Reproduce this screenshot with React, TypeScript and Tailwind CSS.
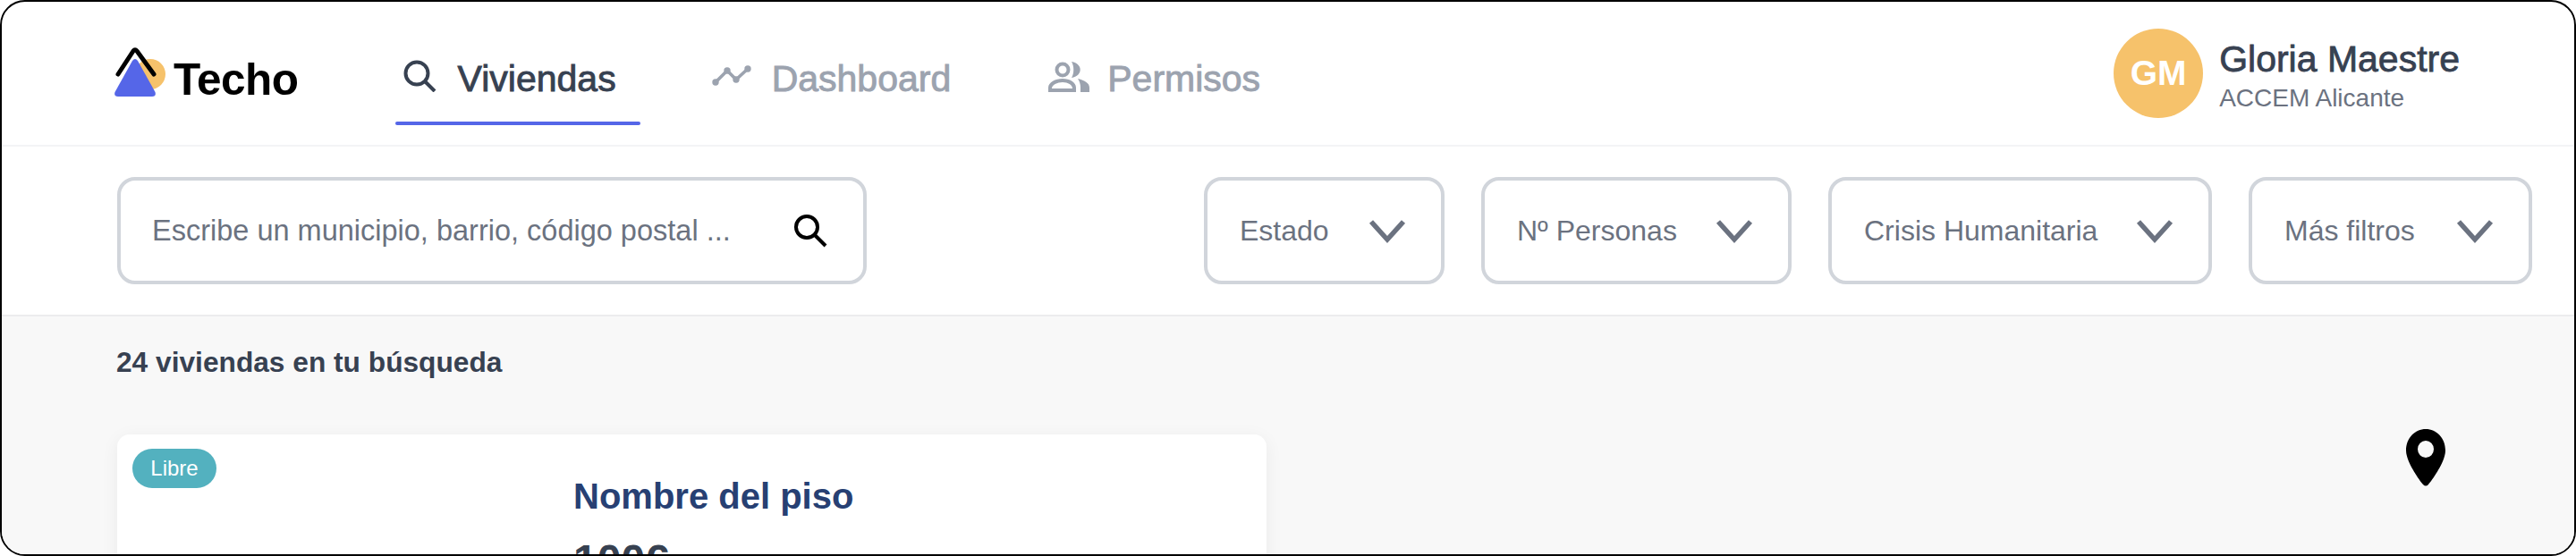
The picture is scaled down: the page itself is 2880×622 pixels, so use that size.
import React from "react";

const font = "font-['Liberation_Sans',Arial,sans-serif]";

function Logo() {
  return (
    <svg width="58" height="58" viewBox="0 0 58 58" className="-mt-[2px] shrink-0">
      <circle cx="40" cy="31" r="17" fill="#f6c26b" />
      <path d="M20 16 Q23 12 26 16 L45.500 51 Q47 56 42 56 L4 56 Q-1 56 0.500 51 Z" fill="#5566e8" />
      <path d="M4 31 L21 5 Q23 2.500 25 5 L44 31" fill="none" stroke="#000" strokeWidth="5" strokeLinecap="round" strokeLinejoin="round" />
    </svg>
  );
}

function NavItem({ icon, label, active, className, gap }: { icon: React.ReactNode; label: string; active?: boolean; className: string; gap: string }) {
  return (
    <div className={`relative flex h-[162px] items-center pt-[12px] ${gap} ${className}`}>
      <div className="-mt-[6px] flex shrink-0 items-center">{icon}</div>
      <span className={`text-[41px] leading-none [-webkit-text-stroke:0.9px_currentColor] ${active ? "text-[#374151]" : "text-[#9ca3af]"}`}>{label}</span>
      {active && <div className="absolute bottom-[23px] left-[-9px] right-[-27px] h-1 rounded-full bg-[#5566e8]" />}
    </div>
  );
}

function Filter({ label, width }: { label: string; width: string }) {
  return (
    <div className={`flex h-[120px] items-center justify-between rounded-[20px] border-4 border-[#d1d5db] pl-[36px] pr-[38px] ${width}`}>
      <span className="text-[32px] leading-none text-[#6b7280]">{label}</span>
      <svg width="44" height="30" viewBox="0 0 44 30" fill="none" stroke="#6b7280" strokeWidth="5.500" className="shrink-0">
        <path d="M4 5 L22 25 L40 5" />
      </svg>
    </div>
  );
}

export default function App() {
  return (
    <div className={`${font} h-[622px] w-[2880px] overflow-hidden bg-white`}>
      <div className="flex h-[622px] flex-col overflow-hidden rounded-[28px] border-2 border-black bg-white">
        <header className="flex h-[162px] shrink-0 items-center border-b-2 border-[#f3f4f6] pl-[126px] pr-[128px]">
          <Logo />
          <span className="ml-[8px] mt-[14px] text-[49.500px] font-bold leading-none tracking-[-0.5px] text-black">Techo</span>
          <NavItem
            className="ml-[117px]"
            gap="gap-[24px]"
            active
            label="Viviendas"
            icon={
              <svg width="37" height="36" viewBox="0 0 37 36" fill="none" stroke="#374151" strokeWidth="4">
                <circle cx="15" cy="15" r="12.500" />
                <path d="M24 24 L35 35" />
              </svg>
            }
          />
          <NavItem
            className="ml-[107px]"
            gap="gap-[23px]"
            label="Dashboard"
            icon={
              <svg width="44" height="24" viewBox="0 0 44 24" fill="none" stroke="#9ca3af" strokeWidth="3.700">
                <path d="M4 19 L17 6 L27 16 L40 4" />
                <circle cx="4" cy="19" r="3.700" fill="#9ca3af" stroke="none" />
                <circle cx="17" cy="6" r="3.700" fill="#9ca3af" stroke="none" />
                <circle cx="27" cy="16" r="3.700" fill="#9ca3af" stroke="none" />
                <circle cx="40" cy="4" r="3.700" fill="#9ca3af" stroke="none" />
              </svg>
            }
          />
          <NavItem
            className="ml-[109px]"
            gap="gap-[20px]"
            label="Permisos"
            icon={
              <svg width="46" height="35" viewBox="0 0 46 35" fill="#9ca3af">
                <circle cx="16" cy="10" r="6.500" fill="none" stroke="#9ca3af" strokeWidth="4" />
                <path d="M26 1 C39 3 39 17 26 19 C29 14 29 6 26 1 Z" />
                <path fillRule="evenodd" d="M0 35 V30 C0 24 8 20 16 20 C24 20 31 24 31 30 V35 Z M4 31 H27 C27 27 22 24 16 24 C10 24 4 27 4 31 Z" />
                <path d="M33 20 C41 22 46 25 46 30 V35 H36 V30 C36 26 35 23 33 20 Z" />
              </svg>
            }
          />
          <div className="ml-auto flex items-center gap-[18px]">
            <div className="flex h-[100px] w-[100px] items-center justify-center rounded-full bg-[#f6c26b] text-[39px] font-bold text-white">GM</div>
            <div className="flex flex-col pt-[12px]">
              <span className="text-[41px] leading-[44px] text-[#374151] [-webkit-text-stroke:0.8px_currentColor]">Gloria Maestre</span>
              <span className="text-[28px] leading-[44px] text-[#6b7280]">ACCEM Alicante</span>
            </div>
          </div>
        </header>

        <div className="flex h-[190px] shrink-0 items-center justify-between border-b-2 border-[#ececee] pl-[129px] pr-[47px]">
          <div className="flex h-[120px] w-[838px] items-center justify-between rounded-[20px] border-4 border-[#d1d5db] pl-[35px] pr-[40px]">
            <span className="text-[32.500px] leading-none text-[#6b7280]">Escribe un municipio, barrio, código postal ...</span>
            <svg width="38" height="38" viewBox="0 0 38 38" fill="none" stroke="#000" strokeWidth="4">
              <circle cx="15" cy="15" r="12" />
              <path d="M24 24 L36 36" />
            </svg>
          </div>
          <div className="flex gap-[41px]">
            <Filter label="Estado" width="w-[269px]" />
            <Filter label="Nº Personas" width="w-[347px]" />
            <Filter label="Crisis Humanitaria" width="w-[429px]" />
            <Filter label="Más filtros" width="w-[317px]" />
          </div>
        </div>

        <main className="relative flex-1 overflow-hidden bg-[#f8f8f8] pl-[128px]">
          <h2 className="mt-[36px] text-[31.700px] font-bold leading-none text-[#374151]">24 viviendas en tu búsqueda</h2>
          <div className="relative ml-[1px] mt-[64px] h-[300px] w-[1285px] rounded-[14px] bg-white pl-[510px] pt-[49px] shadow-[0_4px_20px_rgba(0,0,0,0.06)]">
            <span className="absolute left-[17px] top-[16px] flex h-[44px] w-[94px] items-center justify-center rounded-full bg-[#53b1bf] text-[24px] text-white">Libre</span>
            <h3 className="text-[40px] font-bold leading-none text-[#274073]">Nombre del piso</h3>
            <p className="mt-[28px] text-[48px] font-bold leading-none text-[#374151]">100€</p>
          </div>
          <svg width="44" height="64" viewBox="0 0 44 64" className="absolute left-[2688px] top-[126px]">
            <path fillRule="evenodd" d="M22 0 C34 0 44 10 44 24 C44 36 30 56 25 62 C23 64 21 64 19 62 C14 56 0 36 0 24 C0 10 10 0 22 0 Z M22 13 A9 9.500 0 1 0 22 32 A9 9.500 0 1 0 22 13 Z" fill="#000" />
          </svg>
        </main>
      </div>
    </div>
  );
}
